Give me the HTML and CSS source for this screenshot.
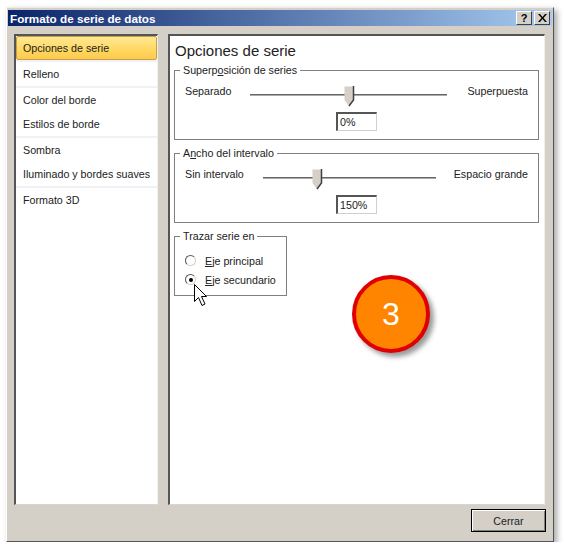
FILE: index.html
```html
<!DOCTYPE html>
<html lang="es">

<head>
    <meta charset="UTF-8">
    <title>Formato de serie de datos</title>
    <link rel="stylesheet" href="styles.css">
</head>

<body>
    <div class="dialog">
        <div class="title-bar">
            <span class="title-text">Formato de serie de datos</span>
            <span class="title-btn">?</span>
            <span class="title-btn title-close">
                <svg width="9" height="8" viewBox="0 0 9 8"><path d="M0 0h2l2.500 3 2.500-3h2L5.500 4 9 8H7L4.500 5 2 8H0l3.500-4z" fill="#000"/></svg>
            </span>
        </div>
        <div class="dialog-body">
            <div class="panel side-list">
                <div class="side-item side-item-active">Opciones de serie</div>
                <div class="side-sep"></div>
                <div class="side-item">Relleno</div>
                <div class="side-sep"></div>
                <div class="side-item">Color del borde</div>
                <div class="side-item">Estilos de borde</div>
                <div class="side-sep"></div>
                <div class="side-item">Sombra</div>
                <div class="side-item">Iluminado y bordes suaves</div>
                <div class="side-sep"></div>
                <div class="side-item">Formato 3D</div>
            </div>
            <div class="panel content">
                <h1 class="content-title">Opciones de serie</h1>
                <fieldset class="group">
                    <legend>Superp<u>o</u>sición de series</legend>
                    <div class="slider-row slider-overlap">
                        <span>Separado</span>
                        <div class="track">
                            <svg class="thumb thumb-overlap" width="11" height="21" viewBox="0 0 11 21">
                                <path d="M0.500 0.500H9.500V14L5 20L0.500 14Z" fill="#d4d0c8"/>
                                <path d="M9.500 0V14L5 20" fill="none" stroke="#404040" stroke-width="1.500"/>
                            </svg>
                        </div>
                        <span class="right-label">Superpuesta</span>
                    </div>
                    <div class="value-box">0%</div>
                </fieldset>
                <fieldset class="group">
                    <legend>A<u>n</u>cho del intervalo</legend>
                    <div class="slider-row slider-gap">
                        <span>Sin intervalo</span>
                        <div class="track">
                            <svg class="thumb thumb-gap" width="11" height="21" viewBox="0 0 11 21">
                                <path d="M0.500 0.500H9.500V14L5 20L0.500 14Z" fill="#d4d0c8"/>
                                <path d="M9.500 0V14L5 20" fill="none" stroke="#404040" stroke-width="1.500"/>
                            </svg>
                        </div>
                        <span class="right-label">Espacio grande</span>
                    </div>
                    <div class="value-box">150%</div>
                </fieldset>
                <fieldset class="group group-axis">
                    <legend>Trazar serie en</legend>
                    <div class="radio-row"><span class="radio"></span><span><u>E</u>je principal</span></div>
                    <div class="radio-row"><span class="radio radio-on"></span><span><u>E</u>je secundario</span></div>
                </fieldset>
            </div>
        </div>
        <div class="dialog-foot">
            <div class="close-btn">Cerrar</div>
        </div>
    </div>

    <!-- callout and mouse pointer sit on top of the dialog -->
    <div class="step-badge">3</div>
    <svg class="pointer" width="14" height="23" viewBox="0 0 14 23">
        <path d="M0.500 0.500V17.500L4.500 13.500L8 21.500L11 20L7.500 12.500H12.500Z" fill="#fff" stroke="#000"/>
    </svg>
</body>

</html>
```

FILE: styles.css
```css
* {
    box-sizing: border-box;
}

body {
    margin: 0;
    background-color: white;
    font-family: "Liberation Sans", sans-serif;
    font-size: 10.700px;
    color: #222;
}

.dialog {
    width: 548px;
    height: 535px;
    margin: 7px 0 0 6px;
    padding: 2px 1px 0 1px;
    background-color: #d4d0c8;
    border: 1px solid;
    border-color: #ececec #555 #555 #fff;
    box-shadow: 3px 3px 6px rgba(0, 0, 0, 0.35);
}

.title-bar {
    display: flex;
    align-items: center;
    gap: 2px;
    height: 16px;
    padding: 0 2px;
    background: linear-gradient(to right, #0a246a, #a6caf0);
}

.title-text {
    flex: 1;
    color: white;
    font-weight: bold;
    font-size: 11.700px;
}

.title-btn {
    display: flex;
    align-items: center;
    justify-content: center;
    width: 16px;
    height: 14px;
    background-color: #d4d0c8;
    border: 1px solid;
    border-color: #fff #404040 #404040 #fff;
    font-weight: bold;
    font-size: 11px;
    color: black;
}

.dialog-body {
    display: flex;
    gap: 10px;
    height: 471px;
    margin-top: 8px;
    padding: 0 7px 0 6px;
}

.panel {
    background-color: white;
    border: 2px solid;
    border-color: #555 #f2f0ea #d8d5cc #555;
    border-width: 2px 1px 1px 2px;
}

.side-list {
    width: 144px;
}

.side-item {
    display: flex;
    align-items: center;
    height: 24px;
    padding-left: 7px;
}

.side-item-active {
    background: linear-gradient(to bottom, #ffe893, #ffd75f 60%, #fdca4d);
    border: 1px solid #c2a14b;
    border-radius: 2px;
    padding-left: 6px;
}

.side-sep {
    height: 2px;
    background-color: #f0f0f6;
}

.content {
    flex: 1;
    padding: 0 5px 0 4px;
}

.content-title {
    margin: 6px 0 4px 1px;
    height: 18px;
    font-size: 15px;
    font-weight: normal;
    line-height: 18px;
}

.group {
    height: 76px;
    margin: 0 0 7px;
    padding: 0 10px;
    border: 1px solid #808080;
}

.group legend {
    margin-left: -5px;
    padding: 0 3px;
    line-height: 12px;
}

.slider-row {
    display: grid;
    align-items: center;
    height: 18px;
    margin-top: 6px;
}

.slider-overlap {
    grid-template-columns: 65px 197px 1fr;
}

.slider-gap {
    grid-template-columns: 78px 173px 1fr;
}

.right-label {
    text-align: right;
}

.track {
    position: relative;
    height: 2px;
    margin-top: 8px;
    background-color: #666;
    border-bottom: 1px solid #aaa;
}

.thumb {
    position: absolute;
    top: -8px;
}

.thumb-overlap {
    left: 94px;
}

.thumb-gap {
    left: 49px;
}

.value-box {
    width: 41px;
    height: 19px;
    margin: 12px 0 0 151px;
    padding-left: 2px;
    background-color: white;
    border: 2px solid;
    border-color: #555 #d4d0c8 #d4d0c8 #555;
    border-width: 2px 1px 1px 2px;
    line-height: 16px;
}

.group-axis {
    width: 113px;
    height: 66px;
    margin-bottom: 0;
    padding-right: 0;
}

.radio-row {
    display: flex;
    align-items: center;
    gap: 9px;
    height: 19px;
    white-space: nowrap;
}

.radio-row:first-of-type {
    margin-top: 9px;
}

.radio {
    position: relative;
    width: 11px;
    height: 11px;
    background-color: white;
    border: 1px solid;
    border-color: #555 #d4d0c8 #d4d0c8 #555;
    border-radius: 50%;
}

.radio-on::after {
    content: "";
    position: absolute;
    top: 3px;
    left: 3px;
    width: 4px;
    height: 4px;
    background-color: black;
    border-radius: 50%;
}

.dialog-foot {
    display: flex;
    justify-content: flex-end;
    padding: 4px 6px 0 0;
}

.close-btn {
    display: flex;
    align-items: center;
    justify-content: center;
    width: 75px;
    height: 23px;
    background-color: #d4d0c8;
    border: 1px solid black;
    box-shadow: inset 1px 1px 0 #fff, inset -1px -1px 0 #808080;
}

.step-badge {
    position: absolute;
    left: 352px;
    top: 275px;
    display: flex;
    align-items: center;
    justify-content: center;
    width: 78px;
    height: 78px;
    background-color: #ff8400;
    border: 4.500px solid #e00000;
    border-radius: 50%;
    box-shadow: 4px 4px 5px rgba(0, 0, 0, 0.4);
    color: white;
    font-size: 32px;
}

.pointer {
    position: absolute;
    left: 194px;
    top: 284px;
}
```
